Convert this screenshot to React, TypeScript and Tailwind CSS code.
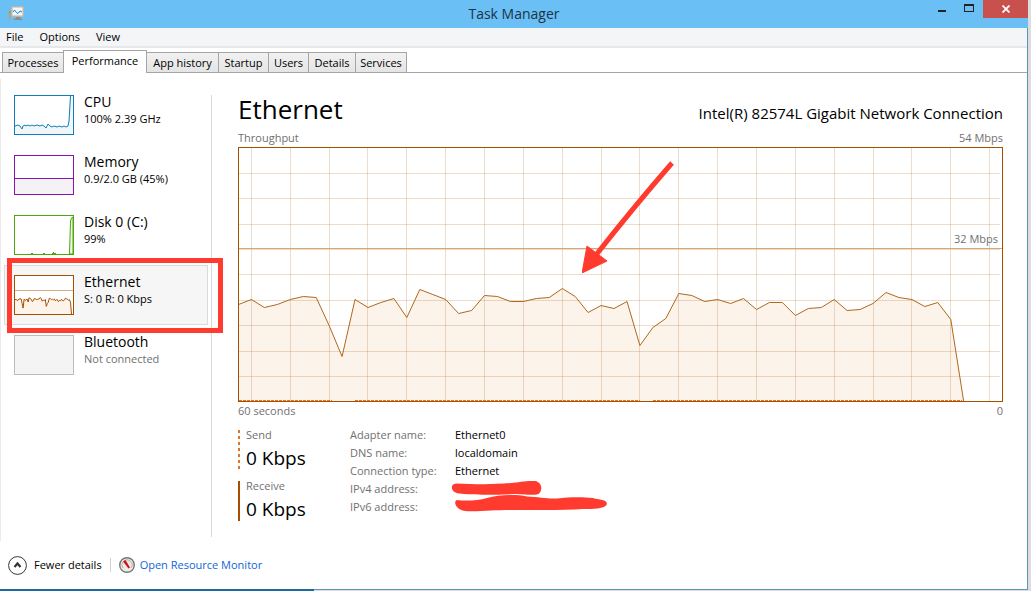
import React from 'react'

const tabs = [
    { name: 'Processes', width: 'w-[62px]' },
    { name: 'Performance', width: 'w-[84px]', active: true },
    { name: 'App history', width: 'w-[73px]' },
    { name: 'Startup', width: 'w-[51px]' },
    { name: 'Users', width: 'w-[41px]' },
    { name: 'Details', width: 'w-[48px]' },
    { name: 'Services', width: 'w-[52px]' },
]

// one sample per second, y from the top of a 255px tall graph
const samples = [
    157, 152, 160, 157, 152, 149, 150, 178, 209, 152, 160, 155, 151, 170, 142, 147, 152, 166, 163, 148,
    149, 154, 154, 151, 150, 141, 149, 165, 158, 161, 154, 198, 180, 171, 146, 148, 154, 152, 156, 151,
    162, 155, 155, 168, 161, 160, 152, 163, 162, 156, 145, 150, 152, 159, 155, 172, 254,
]
const line = samples.map((y, i) => `${(i * 12.95 + 0.5).toFixed(1)},${y + 0.5}`).join(' ')
const thumbLine = samples.map((y, i) => `${(i * 1.01 + 1).toFixed(1)},${(y * 0.156 + 0.5).toFixed(1)}`).join(' ')

const columns = [13, 52, 91, 129, 168, 207, 246, 285, 324, 363, 401, 440, 479, 518, 557, 596, 635, 673, 712, 751]
const rows = [26, 51, 77, 102, 127, 153, 178, 204, 229]

function Thumb({ color, fill = 'white', children }: { color: string; fill?: string; children?: React.ReactNode }) {
    return (
        <svg className="mt-[9px] h-10 w-[60px] shrink-0" viewBox="0 0 60 40" fill="none" stroke={color}>
            <rect x="0.5" y="0.5" width="59" height="39" fill={fill} stroke="none" />
            {children}
            <rect x="0.5" y="0.5" width="59" height="39" />
        </svg>
    )
}

const devices = [
    {
        name: 'CPU',
        detail: '100% 2.39 GHz',
        thumb: (
            <Thumb color="#117dbb">
                <path d="M1 31l3-1 2 1 2 3 1-3 2-1 1 1 2-1 2 1 2-1 2 1 3-1 3 1 2-1 2 1 2 2 2-4 2 2 2 1 2-1 3 1 2-1 3 1 2-1 2 1 2-1 1-5L56.5 1h2v38H1z" fill="#f1f6fa" stroke="none" />
                <path d="M1 31l3-1 2 1 2 3 1-3 2-1 1 1 2-1 2 1 2-1 2 1 3-1 3 1 2-1 2 1 2 2 2-4 2 2 2 1 2-1 3 1 2-1 3 1 2-1 2 1 2-1 1-5L56.5 1" />
            </Thumb>
        ),
    },
    {
        name: 'Memory',
        detail: '0.9/2.0 GB (45%)',
        thumb: (
            <Thumb color="#8b12ae">
                <path d="M0 23.5h60V40H0z" fill="#f4f2f4" />
            </Thumb>
        ),
    },
    {
        name: 'Disk 0 (C:)',
        detail: '99%',
        thumb: (
            <Thumb color="#4da60c">
                <path d="M55.5 39L56.5 6l1-3 1.5-1V39z" fill="#eff7e9" />
                <path d="M17 38.5h2M29 38.5h2M38 38.5h4M39.5 37v2" />
            </Thumb>
        ),
    },
    {
        name: 'Ethernet',
        detail: 'S: 0 R: 0 Kbps',
        active: true,
        thumb: (
            <Thumb color="#a74f01">
                <polygon points={`1,40 ${thumbLine}`} fill="#fcf3eb" stroke="none" />
                <polyline points={thumbLine} />
                <path d="M1 15.5h58" stroke="#d9ab80" />
            </Thumb>
        ),
    },
    {
        name: 'Bluetooth',
        detail: 'Not connected',
        muted: true,
        thumb: <Thumb color="#bcbcbc" fill="#f4f4f4" />,
    },
]

function TitleBar() {
    return (
        <header className="relative flex h-7 items-center justify-center bg-[#6abff5] text-[#1b3345]">
            <svg className="absolute left-2 top-[5px] h-4 w-4" viewBox="0 0 16 16">
                <path d="M0.5 5h2.5v9.5H0.5z" fill="#a9a69f" />
                <path d="M1 6.5h1.5v2H1z" fill="#59c328" />
                <path d="M3 1h13v11H3z" fill="#b9b5ae" />
                <path d="M4.5 2.5h10v8h-10z" fill="#eef8fc" />
                <path d="M5 7l1.500-2 2 2.500 1.500 1 2-2.500 2 1" fill="none" stroke="#1787ba" />
                <path d="M8 12h4v1.5h2V15H6v-1.5h2z" fill="#8f8c88" />
            </svg>
            <h1 className="text-sm">Task Manager</h1>
            <div className="absolute right-0 top-0 flex h-[18px]">
                <button aria-label="Minimize" className="flex w-[26px] items-center justify-center">
                    <span className="mt-1 h-0.5 w-2 bg-[#222]" />
                </button>
                <button aria-label="Maximize" className="flex w-7 items-center justify-center">
                    <span className="mb-0.5 h-2 w-2.5 border border-t-2 border-[#222]" />
                </button>
                <button aria-label="Close" className="flex w-[45px] items-center justify-center bg-[#c8504d]">
                    <svg className="h-2 w-2" viewBox="0 0 8 8" stroke="white" strokeWidth="1.8">
                        <path d="M0.5 0.5l7 7M7.5 0.5l-7 7" />
                    </svg>
                </button>
            </div>
        </header>
    )
}

function Graph() {
    return (
        <div className="relative h-[255px]">
            <svg className="h-full w-full" viewBox="0 0 765 255" preserveAspectRatio="none" fill="none">
                <polygon points={`0,254 ${line}`} fill="#fcf3eb" />
                <g stroke="#a74f01" strokeOpacity="0.2" shapeRendering="crispEdges">
                    {columns.map((x) => (
                        <path key={x} d={`M${x + 0.5} 1V254`} />
                    ))}
                    {rows.map((y) => (
                        <path key={y} d={`M1 ${y + 0.5}H762`} />
                    ))}
                </g>
                <path d="M0 101.5H765" stroke="#d6a578" />
                <path d="M1 253.5H94M117 253.5H402M415 253.5H724" stroke="#e2731f" strokeDasharray="3 1" />
                <polyline points={line} stroke="#b0671d" />
                <rect x="0.5" y="0.5" width="764" height="254" stroke="#a74f01" />
            </svg>
            <span className="absolute right-[5px] top-[84px] text-[#707070]">32 Mbps</span>
            <svg className="absolute left-[45%] top-3.5 h-[112px] w-[92px]" viewBox="0 0 92 112">
                <path d="M90 2C70 25 36 66 14 94" stroke="#ff3b30" strokeWidth="5" fill="none" />
                <path d="M0 112L5 85l20 15z" fill="#ff3b30" stroke="#ff3b30" />
            </svg>
        </div>
    )
}

function Rate({ label, dashed }: { label: string; dashed?: boolean }) {
    return (
        <div className="flex gap-1.5">
            <svg className="mt-[3px] h-10 w-0.5" viewBox="0 0 2 40">
                <path
                    d="M1 0v40"
                    strokeWidth="2"
                    stroke={dashed ? '#e2731f' : '#a74f01'}
                    strokeDasharray={dashed ? '3 3' : undefined}
                />
            </svg>
            <div>
                <p className="text-[#707070]">{label}</p>
                <p className="text-[19px] leading-[30px]">0 Kbps</p>
            </div>
        </div>
    )
}

export default function App() {
    return (
        <div className="min-h-screen bg-[#dddde0] pr-[3px] font-['Open_Sans',sans-serif] text-[11px] leading-4 text-black">
            <div className="flex min-h-screen flex-col bg-white">
                <TitleBar />
                <div className="flex flex-1 flex-col border-r border-[#5b94bc]">
                    <nav className="flex h-5 gap-4 border-b-2 border-[#e6e8ea] bg-[#f4f5f7] px-1.5">
                        <button>File</button>
                        <button>Options</button>
                        <button>View</button>
                    </nav>
                    <div className="flex h-[25px] items-end border-b border-[#a5a5a5] pl-0.5" role="tablist">
                        {tabs.map((tab) => (
                            <button
                                key={tab.name}
                                role="tab"
                                aria-selected={!!tab.active}
                                className={`${tab.width} -mr-px border border-b-0 border-[#a5a5a5] whitespace-nowrap ${
                                    tab.active ? 'relative z-10 -mb-px h-[23px] bg-white pb-0.5' : 'h-5 bg-linear-to-b from-[#f1f1f1] to-[#e5e5e5]'
                                }`}
                            >
                                {tab.name}
                            </button>
                        ))}
                    </div>

                    <div className="flex flex-1">
                        <aside className="mt-1.5 w-[211px] shrink-0 border-l border-[#ebebeb] pl-[3px] pt-1.5">
                            {devices.map((device) => (
                                <button
                                    key={device.name}
                                    className={`relative flex h-[60px] w-[204px] items-start gap-2.5 border pl-[9px] text-left ${
                                        device.active ? 'border-[#dadbdc] bg-[#f6f6f6]' : 'border-transparent'
                                    }`}
                                >
                                    {device.thumb}
                                    <span className="pt-1.5">
                                        <span className="block text-sm leading-5">{device.name}</span>
                                        <span className={`block leading-3.5 ${device.muted ? 'text-[#707070]' : ''}`}>{device.detail}</span>
                                    </span>
                                    {device.active && (
                                        <span className="absolute -top-2 left-0.5 z-10 h-[75px] w-[216px] border-5 border-[#ff3b30]" />
                                    )}
                                </button>
                            ))}
                        </aside>
                        <div className="mb-1 mt-[22px] w-px bg-[#d8d8da]" />

                        <main className="ml-[26px] mr-6 min-w-0 flex-1 pt-[18px]">
                            <div className="flex items-baseline justify-between">
                                <h2 className="text-[26px] leading-9">Ethernet</h2>
                                <p className="text-[15px]">Intel(R) 82574L Gigabit Network Connection</p>
                            </div>
                            <div className="mt-[3px] flex h-[17px] justify-between text-[#707070]">
                                <span>Throughput</span>
                                <span>54 Mbps</span>
                            </div>
                            <Graph />
                            <div className="flex justify-between pt-px text-[#707070]">
                                <span>60 seconds</span>
                                <span>0</span>
                            </div>

                            <div className="mt-[7px] flex">
                                <div className="flex w-28 flex-col gap-[5px] pt-px">
                                    <Rate label="Send" dashed />
                                    <Rate label="Receive" />
                                </div>
                                <dl className="grid grid-cols-[105px_160px] content-start leading-[18px]">
                                    <dt className="text-[#707070]">Adapter name:</dt>
                                    <dd>Ethernet0</dd>
                                    <dt className="text-[#707070]">DNS name:</dt>
                                    <dd>localdomain</dd>
                                    <dt className="text-[#707070]">Connection type:</dt>
                                    <dd>Ethernet</dd>
                                    <dt className="text-[#707070]">IPv4 address:</dt>
                                    <dd className="relative">
                                        <svg className="absolute -left-1 top-0 h-4 w-[92px]" viewBox="0 0 92 16" fill="#ff3b30">
                                            <path d="M5 3.5C20 4 40 5 60 3C68 2.5 74 0.5 84 1C92 2 92 13 86 14.5C78 15.5 72 13.5 62 14C44 15 20 15 8 13.5C-1 12 -1 4 5 3.5z" />
                                        </svg>
                                    </dd>
                                    <dt className="text-[#707070]">IPv6 address:</dt>
                                    <dd className="relative">
                                        <svg className="absolute left-0 -top-1 h-5 w-[154px]" viewBox="0 0 154 20" fill="#ff3b30">
                                            <path d="M2 6C10 7 22 7 32 4C44 1 60 0 72 2.5C84 3 92 5 102 4.5C114 3 128 3 138 4C144 6 152 5 152 10C150 15 138 15 128 15C100 17 60 15 36 16.5C22 17 8 19 3 14C0 12 -1 7 2 6z" />
                                        </svg>
                                    </dd>
                                </dl>
                            </div>
                        </main>
                    </div>

                    <footer className="flex h-12 items-center pl-2">
                        <button className="flex items-center gap-[7px]">
                            <svg className="h-[19px] w-[19px]" viewBox="0 0 19 19" fill="none" stroke="#333">
                                <circle cx="9.5" cy="9.5" r="8.9" />
                                <path d="M6.5 11l3-3.5 3 3.5" strokeWidth="2.2" />
                            </svg>
                            Fewer details
                        </button>
                        <span className="mx-2 h-3.5 w-px bg-[#d0d0d0]" />
                        <a href="#resmon" className="flex items-center gap-[5px] text-[#0f66d8]">
                            <svg className="h-4 w-4" viewBox="0 0 16 16" fill="none">
                                <circle cx="8" cy="8" r="7.3" fill="#eeece6" stroke="#777" strokeWidth="1.4" />
                                <path d="M4 11a5 5 0 1 1 8 0" stroke="#b4aea4" />
                                <path d="M4 4.5L6.5 3l4.5 7.5-1.5 1z" fill="#d3141a" />
                            </svg>
                            Open Resource Monitor
                        </a>
                    </footer>
                </div>
                <div className="h-0.5 border-t border-[#5b94bc] bg-[#dddde0]">
                    <div className="-mt-px h-0.5 w-[314px] bg-[#1b6b9e]" />
                </div>
            </div>
        </div>
    )
}
